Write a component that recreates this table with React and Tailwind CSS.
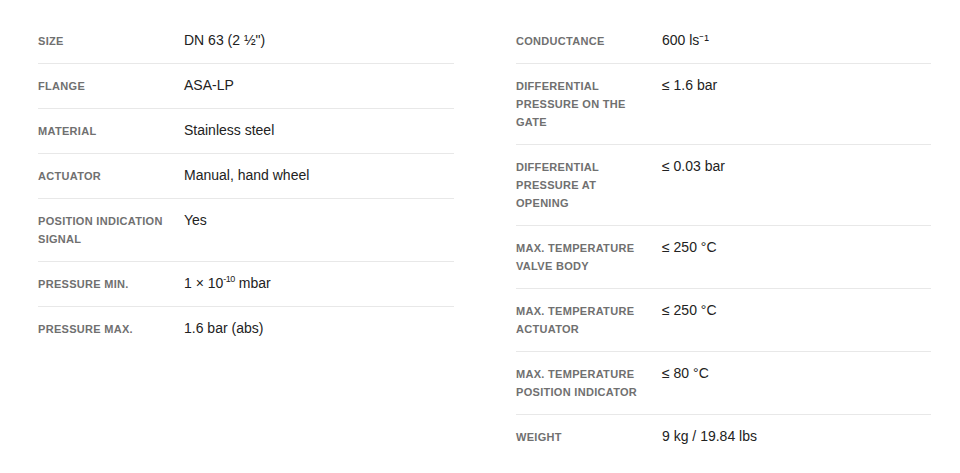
const left = [
  ["Size", "DN 63 (2 ½\")"],
  ["Flange", "ASA-LP"],
  ["Material", "Stainless steel"],
  ["Actuator", "Manual, hand wheel"],
  ["Position indication signal", "Yes"],
  ["Pressure min.", "min"],
  ["Pressure max.", "1.6 bar (abs)"],
];

const right = [
  ["Conductance", "600 ls⁻¹"],
  ["Differential pressure on the gate", "≤ 1.6 bar"],
  ["Differential pressure at opening", "≤ 0.03 bar"],
  ["Max. temperature valve body", "≤ 250 °C"],
  ["Max. temperature actuator", "≤ 250 °C"],
  ["Max. temperature position indicator", "≤ 80 °C"],
  ["Weight", "9 kg / 19.84 lbs"],
];

function Value({ v }) {
  if (v === "min") {
    return (
      <span>
        1 × 10<sup className="text-[9px] tracking-[-0.5px] -top-[6px]">-10</sup> mbar
      </span>
    );
  }
  return <span>{v}</span>;
}

function SpecList({ rows }) {
  return (
    <div className="flex flex-col">
      {rows.map(([label, value], i) => (
        <div
          key={label}
          className={
            "flex py-[13px] " +
            (i < rows.length - 1 ? "border-b border-[#e8e8e8]" : "")
          }
        >
          <div className="w-[146px] shrink-0 pr-[14px] text-[11px] font-bold uppercase leading-[18px] tracking-[0.3px] text-[#707070]">
            {label}
          </div>
          <div className="text-[14px] leading-[16px] text-[#222]">
            <Value v={value} />
          </div>
        </div>
      ))}
    </div>
  );
}

export default function App() {
  return (
    <div
      className="min-h-screen bg-white pt-[19px] px-[38px]"
      style={{ fontFamily: "'Liberation Sans', Arial, sans-serif" }}
    >
      <div className="grid grid-cols-[416px_415px] gap-x-[62px] items-start">
        <SpecList rows={left} />
        <SpecList rows={right} />
      </div>
    </div>
  );
}
